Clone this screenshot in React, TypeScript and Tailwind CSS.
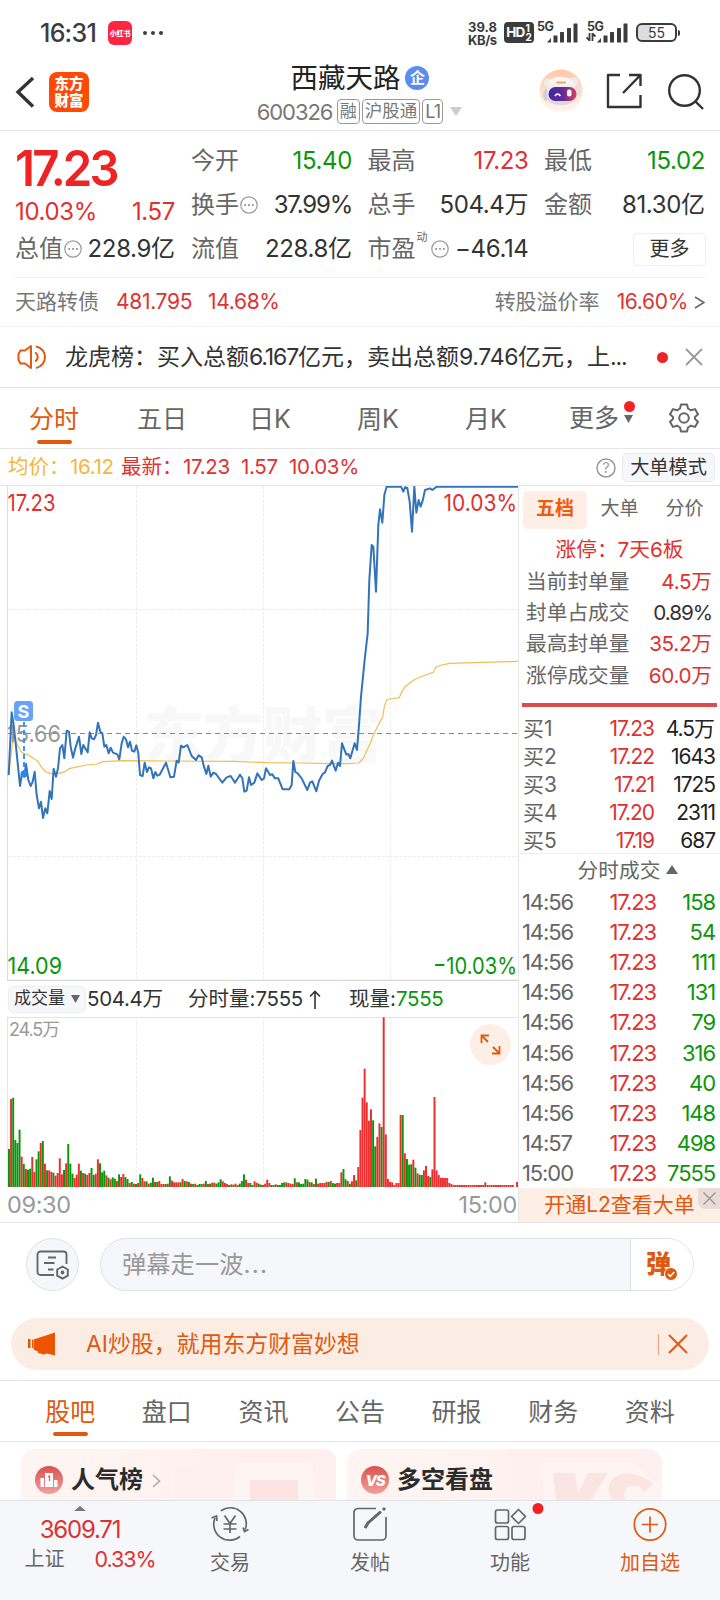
import React from 'react';
import clsx from 'clsx';

// volume bars, one per minute; negative = green
const VOLUMES = [
  -114, 264, -268, -141, -132, -172, 91, -69, 54, -52, -55, 90, 45, -83, -107, 132, -138, 70, -50, 50,
  45, -43, 34, 42, 86, 38, -51, 71, -129, -70, -40, 27, 37, 70, -49, 42, -40, 36, 42, -57,
  -36, 40, 83, -71, -44, -49, 35, -28, 23, -29, -25, 18, -38, 30, 39, -30, -24, 12, -15, 10,
  -9, 12, -38, 27, 17, -17, 10, -13, -28, 15, -15, 18, 9, 9, -9, 10, -32, 19, 14, 14,
  14, -14, 24, -18, 17, -15, 10, -9, 10, -6, -9, -9, 10, -18, 9, -10, 13, 13, -10, -14,
  -23, 17, 12, 9, -6, 8, -7, 10, 6, -10, -18, -38, 22, 12, -12, -6, 17, 13, -10, -7,
  6, 10, 22, 12, -6, -6, 8, -6, -6, -12, -14, 14, 12, 10, 9, -26, 14, -14, -9, -10,
  -24, -22, 15, -14, 9, -25, 10, 12, 12, 12, 15, -15, 18, -12, -10, 12, 12, 44, -54, -23,
  18, -10, 17, 36, -20, 60, 171, 268, 355, 254, 199, 233, -200, -122, 150, 191, -180, 509, 158, 24,
  15, 14, 6, 12, 12, 216, -216, 101, -84, -67, -68, 82, -58, 41, -37, -36, 50, 63, 33, -30,
  53, 270, 50, 36, 28, 27, 27, 27, 12, 9, 6, 6, 6, 6, 6, 6, 6, 6, 6, 6,
  6, 6, 6, 6, 6, 14, 6, 6, 6, 6, 6, 6, 6, 6, 6, 6, 6, 6, 6, 0, 15,
];

const PRICE_LINE =
  '26,885 35,697 41,735 48,800 60,918 66,880 73,890 78,852 85,900 92,918 98,905 104,875 110,945 117,985 123,965 129,1014 136,985 142,1000 149,933 155,957 161,866 168,890 174,865 180,805 187,795 193,835 200,752 207,755 212,800 219,833 226,805 237,770 244,822 250,795 263,817 269,757 275,775 282,778 288,765 294,728 301,755 307,760 313,800 319,795 326,820 332,803 339,818 352,823 358,838 365,790 371,770 378,778 384,802 390,785 396,812 403,815 409,796 415,820 420,885 428,888 434,848 441,876 447,862 453,865 460,895 466,876 472,887 479,884 498,848 504,868 511,892 522,890 530,842 536,848 543,797 550,802 562,795 575,828 588,840 596,826 605,832 612,860 619,882 625,857 632,890 640,878 648,882 667,908 680,892 692,888 705,908 720,884 727,895 733,935 740,932 747,892 753,915 763,908 772,880 785,900 792,895 798,865 810,885 817,883 825,895 835,895 848,928 868,928 875,915 880,843 886,876 893,880 905,895 922,930 930,908 937,904 949,934 957,902 968,882 975,877 983,858 990,855 996,842 1007,872 1014,848 1020,858 1026,790 1039,824 1045,822 1051,835 1064,790 1071,810 1077,735 1083,650 1095,530 1103,460 1108,300 1115,195 1120,200 1128,335 1135,135 1140,88 1147,128 1153,45 1160,20 1203,20 1210,35 1215,22 1222,24 1229,65 1236,155 1243,20 1249,98 1256,60 1262,80 1268,62 1275,30 1290,25 1297,30 1310,20 1554,20';

const AVG_LINE =
  '26,885 41,760 52,795 66,818 85,825 104,838 112,842 125,862 138,876 150,880 178,880 195,875 210,865 260,855 290,852 310,845 370,842 500,843 700,844 800,848 900,849 1000,851 1040,851 1077,849 1090,835 1100,812 1110,792 1120,765 1130,745 1140,725 1148,712 1153,680 1160,660 1170,657 1198,653 1203,640 1215,620 1245,598 1290,580 1300,577 1308,562 1325,555 1350,550 1450,547 1554,544';

const BUYS = [
  ['买1', '17.23', '4.5万'],
  ['买2', '17.22', '1643'],
  ['买3', '17.21', '1725'],
  ['买4', '17.20', '2311'],
  ['买5', '17.19', '687'],
];

const TICKS = [
  ['14:56', '158'],
  ['14:56', '54'],
  ['14:56', '111'],
  ['14:56', '131'],
  ['14:56', '79'],
  ['14:56', '316'],
  ['14:56', '40'],
  ['14:56', '148'],
  ['14:57', '498'],
  ['15:00', '7555'],
];

const Num: React.FC<{ children: React.ReactNode; className?: string; loose?: boolean }> = ({ children, className, loose }) => (
  <span className={clsx(loose ? 'tracking-[-0.015em]' : 'tracking-[-0.05em]', className)}>{children}</span>
);

const MoreDots = () => (
  <svg width="18" height="18" viewBox="0 0 18 18" className="ml-px shrink-0">
    <circle cx="9" cy="9" r="8.2" fill="none" stroke="#999" strokeWidth="1.2" />
    <circle cx="5.2" cy="9" r="1" fill="#888" />
    <circle cx="9" cy="9" r="1" fill="#888" />
    <circle cx="12.8" cy="9" r="1" fill="#888" />
  </svg>
);

const Signal = () => (
  <svg width="31" height="20" viewBox="0 0 31 20" fill="#3c3c3c">
    <path d="M0 19.500L4 15v4.500z" />
    <rect x="6.500" y="12.500" width="4" height="7" rx="0.500" />
    <rect x="13" y="9" width="4" height="10.500" rx="0.500" />
    <rect x="20" y="5" width="4" height="14.500" rx="0.500" />
    <rect x="26.500" y="0.500" width="4" height="19" rx="0.500" />
  </svg>
);

const StatusBar = () => (
  <div className="flex h-[58px] shrink-0 items-start pl-[40px] pr-[40px] text-[#3c3c3c]">
    <span className="mt-[17px] w-[68px] text-[25px] font-medium leading-[32px] tracking-[-0.03em]">16:31</span>
    <div className="mt-[21px] flex h-6 w-6 items-center justify-center rounded-[6px] bg-[#ff2442]">
      <span className="text-[7px] font-black leading-none tracking-[-0.03em] text-white">小红书</span>
    </div>
    <div className="ml-[11px] mt-[31px] flex gap-[4px]">
      <i className="h-1 w-1 rounded-full bg-[#3c3c3c]" />
      <i className="h-1 w-1 rounded-full bg-[#3c3c3c]" />
      <i className="h-1 w-1 rounded-full bg-[#3c3c3c]" />
    </div>
    <div className="ml-auto mt-[21px] flex">
      <div className="w-[36px] text-[13px] font-bold leading-[13px]">
        <div>39.8</div>
        <div className="tracking-[-0.03em]">KB/s</div>
      </div>
      <div className="mt-[1px] flex h-[21px] w-[30px] items-center justify-center rounded-[4px] bg-[#3c3c3c] text-white">
        <span className="text-[13.500px] font-bold tracking-[-0.060em]">HD</span>
        <span className="ml-px text-[10px] font-bold leading-[9px]">1<br />2</span>
      </div>
      <div className="relative ml-[3px] w-[49px]">
        <span className="absolute left-0 top-[-1px] text-[12.500px] font-bold leading-[13px] tracking-[-0.03em]">5G</span>
        <div className="ml-[10px] mt-[2px]"><Signal /></div>
      </div>
      <div className="relative w-[49px]">
        <span className="absolute left-[1px] top-[-1px] text-[12.500px] font-bold leading-[13px] tracking-[-0.03em]">5G</span>
        <svg width="10" height="8" viewBox="0 0 10 8" className="absolute bottom-[6px] left-0" fill="none" stroke="#3c3c3c" strokeWidth="1.800">
          <path d="M3.500 0v7.500L0.500 4.500M6.500 8V0.500L9.500 3.500" />
        </svg>
        <div className="ml-[11px] mt-[2px]"><Signal /></div>
      </div>
      <div className="ml-[1px] mt-[2px] flex h-[19px] items-center">
        <div className="flex h-[19px] w-[41px] items-center justify-center rounded-[6px] border-2 border-[#3c3c3c] bg-gradient-to-r from-[#ddd] from-35% to-white to-35% text-[14px] leading-none">55</div>
        <div className="ml-px h-[6px] w-[2px] rounded-r bg-[#3c3c3c]" />
      </div>
    </div>
  </div>
);

const Robot = () => (
  <svg width="44" height="44" viewBox="0 0 44 44">
    <defs>
      <linearGradient id="halo" x1="0" y1="0" x2="0" y2="1">
        <stop offset="0" stopColor="#ffc7a8" />
        <stop offset="1" stopColor="#fff7f2" />
      </linearGradient>
      <linearGradient id="visor" x1="0" y1="0" x2="1" y2="0">
        <stop offset="0" stopColor="#3a2aa8" />
        <stop offset="0.550" stopColor="#6b2a94" />
        <stop offset="1" stopColor="#e0405f" />
      </linearGradient>
      <linearGradient id="shell" x1="0" y1="0" x2="0" y2="1">
        <stop offset="0" stopColor="#fdfbfb" />
        <stop offset="1" stopColor="#d9d3d9" />
      </linearGradient>
    </defs>
    <circle cx="22" cy="22" r="21.500" fill="url(#halo)" />
    <circle cx="9" cy="13.500" r="4" fill="#f3eaea" />
    <circle cx="35" cy="12.500" r="4" fill="#f3eaea" />
    <ellipse cx="7.500" cy="26" rx="3.500" ry="6" fill="#d3ced6" />
    <ellipse cx="38" cy="22" rx="3" ry="6" fill="#e4dfe3" />
    <path d="M8 18c0-7 6-10 14-10s14 3 14 10v10c0 5-6 8-14 8S8 33 8 28z" fill="url(#shell)" />
    <rect x="17" y="12.500" width="10" height="2" rx="1" fill="#f3a66c" />
    <rect x="9.500" y="18" width="28" height="14" rx="7" fill="url(#visor)" />
    <path d="M16 27q2.500-4 5.500 0" fill="none" stroke="#fff" strokeWidth="1.600" />
    <rect x="28" y="20.500" width="4.500" height="7" rx="2" fill="#fff" />
  </svg>
);

const Header = () => (
  <div className="flex h-[73px] shrink-0 items-start justify-between border-b border-[#e6e6e6] pl-[15px] pr-[16px]">
    <div className="mt-[14px] flex w-[200px] items-center gap-[14px]">
      <svg width="20" height="34" viewBox="0 0 20 34" fill="none" stroke="#333" strokeWidth="3.400">
        <path d="M18 3L3 17l15 14.500" />
      </svg>
      <div className="flex h-[40px] w-[40px] flex-col items-center justify-center rounded-[8px] bg-[#ff4a05] text-[14.500px] font-black leading-[17px] text-white">
        <span>东方</span>
        <span>财富</span>
      </div>
    </div>
    <div className="flex flex-col items-center">
      <div className="flex h-[39px] items-center gap-[5px] pl-px">
        <h1 className="text-[27.500px] leading-[36px] text-[#222]">西藏天路</h1>
        <span className="flex h-[24px] w-[24px] items-center justify-center rounded-full bg-[#5b8dee] text-[15px] font-bold leading-none text-white">企</span>
      </div>
      <div className="mt-[2px] flex items-center gap-[2px] text-[#777]">
        <span className="mr-[2px] w-[76px] text-[22px] leading-[24px] tracking-[-0.05em]">600326</span>
        <span className="flex h-[25px] items-center rounded-[4px] border border-[#999] px-[2px] text-[17px]">融</span>
        <span className="flex h-[25px] items-center rounded-[4px] border border-[#999] px-[2px] text-[17.500px]">沪股通</span>
        <span className="flex h-[25px] items-center rounded-[4px] border border-[#999] px-[2px] text-[18px] tracking-[-0.05em]">L1</span>
        <svg width="12" height="9" viewBox="0 0 12 9" className="ml-[5px]"><path d="M0 0h12L6 9z" fill="#ccc" /></svg>
      </div>
    </div>
    <div className="mt-[11px] flex w-[200px] items-center justify-end">
      <Robot />
      <svg width="36" height="36" viewBox="0 0 36 36" className="ml-[23px]" fill="none" stroke="#333" strokeWidth="2.400" strokeLinejoin="round">
        <path d="M14 2H2v32h32.500V22M23 2h11.500v11M34 2.500L17 20" />
      </svg>
      <svg width="37" height="37" viewBox="0 0 37 37" className="ml-[25px]" fill="none" stroke="#333" strokeWidth="2.400">
        <circle cx="17.500" cy="17.500" r="15.300" />
        <path d="M28.500 28.500L36 36" />
      </svg>
    </div>
  </div>
);

const Cell: React.FC<{ label: React.ReactNode; value: React.ReactNode; color?: string }> = ({ label, value, color = 'text-[#333]' }) => (
  <div className="flex h-[44px] items-center justify-between whitespace-nowrap">
    <span className="flex items-center text-[#666]">{label}</span>
    <span className={color}>{value}</span>
  </div>
);

const Quote = () => (
  <div className="mx-[15px] flex h-[147px] shrink-0 gap-[16px] border-b border-[#eee] pt-[8px] text-[24px] leading-[32px]">
    <div className="w-[161px] text-[#e03131]">
      <div className="flex h-[57px] items-center">
        <span className="origin-left scale-x-[0.945] text-[50px] font-semibold leading-[56px] tracking-[-0.060em] text-[#ee2424]">17.23</span>
      </div>
      <div className="flex h-[31px] items-center justify-between">
        <Num loose>10.03%</Num>
        <Num loose>1.57</Num>
      </div>
      <Cell label={<>总值<MoreDots /></>} value={<><Num loose>228.9</Num>亿</>} />
    </div>
    <div className="grid flex-1 grid-cols-[161px_161px_161px] content-start gap-x-[15.500px]">
      <Cell label="今开" value={<Num loose>15.40</Num>} color="text-[#0a960a]" />
      <Cell label="最高" value={<Num loose>17.23</Num>} color="text-[#e03131]" />
      <Cell label="最低" value={<Num loose>15.02</Num>} color="text-[#0a960a]" />
      <Cell label={<>换手<MoreDots /></>} value={<Num>37.99%</Num>} />
      <Cell label="总手" value={<><Num loose>504.4</Num>万</>} />
      <Cell label="金额" value={<><Num loose>81.30</Num>亿</>} />
      <Cell label="流值" value={<><Num loose>228.8</Num>亿</>} />
      <Cell
        label={<>市盈<span className="mb-[24px] ml-px mr-[2px] text-[11px] leading-none">动</span><MoreDots /></>}
        value={<Num loose>−46.14</Num>}
      />
      <div className="flex h-[44px] items-center justify-end">
        <button className="mr-[-1px] h-[33px] w-[73px] rounded-[4px] border border-[#eee] text-[20px] leading-[30px] text-[#333]">更多</button>
      </div>
    </div>
  </div>
);

const BondRow = () => (
  <div className="flex h-[49px] shrink-0 items-center border-b border-[#f3f3f3] pl-[15px] pr-[15px] text-[21px] text-[#e03131]">
    <span className="w-[101px] text-[#777]">天路转债</span>
    <Num loose className="w-[92px]">481.795</Num>
    <Num loose>14.68%</Num>
    <span className="ml-auto w-[122px] text-[#777]">转股溢价率</span>
    <Num loose>16.60%</Num>
    <svg width="11" height="13" viewBox="0 0 11 13" className="ml-[6px]" fill="none" stroke="#666" strokeWidth="1.500">
      <path d="M1 1l9 5.500L1 12" />
    </svg>
  </div>
);

const Ticker = () => (
  <div className="flex h-[61px] shrink-0 items-center border-b border-[#e6e6e6] pl-[17px] pr-[17px]">
    <svg width="31" height="26" viewBox="0 0 31 26" fill="none" stroke="#e0590f" strokeWidth="2" strokeLinejoin="round">
      <path d="M14 2v22l-6-4.500H3.500L1.500 16V10l2-3.500H8z" />
      <path d="M18 8.500c3.500 2 3.500 7 0 9M19 2.500c12 2 12 19 0 21.500" />
    </svg>
    <span className="ml-[17px] whitespace-nowrap text-[23px] leading-[30px] text-[#333]">
      龙虎榜：买入总额<Num>6.167</Num>亿元，卖出总额<Num loose>9.746</Num>亿元，上<Num>...</Num>
    </span>
    <i className="ml-auto h-[11px] w-[11px] rounded-full bg-[#ee2424]" />
    <svg width="18" height="18" viewBox="0 0 18 18" className="ml-[17px]" stroke="#999" strokeWidth="1.800">
      <path d="M1 1l16 16M17 1L1 17" />
    </svg>
  </div>
);

const PeriodTabs = () => (
  <div className="flex h-[61px] shrink-0 border-b border-[#e6e6e6] text-[25px] text-[#666]">
    {['分时', '五日', '日K', '周K', '月K'].map((tab, idx) => (
      <div key={tab} className={clsx('flex w-[108px] flex-col items-center justify-end', idx === 0 && 'text-[#e0590f]')}>
        <span className="leading-[36px]">{tab}</span>
        <i className={clsx('mb-[4px] mt-[3px] h-[4px] w-[35px] rounded-full', idx === 0 && 'bg-[#e0590f]')} />
      </div>
    ))}
    <div className="relative flex w-[108px] items-center justify-center pt-[2px]">
      更多
      <i className="absolute right-[13.500px] top-[13px] h-[11px] w-[11px] rounded-full bg-[#ee2424]" />
      <svg width="9" height="8" viewBox="0 0 9 8" className="absolute right-[15px] top-[27px]"><path d="M0 0h9L4.500 8z" fill="#666" /></svg>
    </div>
    <div className="flex w-[72px] items-center justify-center">
      <svg width="30" height="30" viewBox="0 0 30 30" fill="none" stroke="#666" strokeWidth="2" strokeLinejoin="round">
        <path d="M12 1.500h6l1 4 3 1.800 4-1.200 3 5.200-3 2.700v2l3 2.700-3 5.200-4-1.200-3 1.800-1 4h-6l-1-4-3-1.800-4 1.200-3-5.200 3-2.700v-2l-3-2.700 3-5.200 4 1.200 3-1.800z" />
        <circle cx="15" cy="15" r="4.800" />
      </svg>
    </div>
  </div>
);

const AvgRow = () => (
  <div className="flex h-[37px] shrink-0 items-center border-b border-[#e6e6e6] pl-[8px] pr-[5px] pt-px text-[20.500px] text-[#e03131]">
    <span className="w-[62px] text-[#f5b63f]">均价：</span>
    <Num loose className="w-[51px] text-[#f5b63f]">16.12</Num>
    <span className="w-[62px]">最新：</span>
    <Num loose className="w-[58px]">17.23</Num>
    <Num loose className="w-[48px]">1.57</Num>
    <Num loose>10.03%</Num>
    <svg width="20" height="20" viewBox="0 0 20 20" className="ml-auto">
      <circle cx="10" cy="10" r="9" fill="none" stroke="#999" strokeWidth="1.500" />
      <text x="10" y="15" textAnchor="middle" fontSize="14" fill="#999">?</text>
    </svg>
    <span className="ml-[6px] flex h-[29px] w-[93px] items-center justify-center rounded-[5px] border border-[#e8eaee] bg-[#f6f7fa] text-[19.200px] text-[#333]">大单模式</span>
  </div>
);

const PriceChart = () => (
  <svg width="518" height="495" viewBox="0 486 518 495" className="block">
    <text x="144" y="757" fontSize="60" fontWeight="900" fill="#f8f8f8" textLength="238">东方财富</text>
    <g stroke="#ececec" strokeDasharray="3 1.500" strokeWidth="1">
      <path d="M136.500 486v494M263.500 486v494M390.500 486v494M8 609.500h510M8 856.500h510" />
    </g>
    <path d="M7.500 486v494" stroke="#ddd" />
    <path d="M7 980.300h512" stroke="#ccc" />
    <g fill="none" transform="translate(0 480) scale(0.33333)" strokeLinejoin="round">
      <polyline points={AVG_LINE} stroke="#f2bd4f" strokeWidth="3.500" />
    </g>
    <path d="M8 733.500h510" stroke="#888" strokeDasharray="5 4" />
    <text x="7" y="742" fontSize="23.500" fill="#999" textLength="54" lengthAdjust="spacingAndGlyphs">15.66</text>
    <g fill="none" transform="translate(0 480) scale(0.33333)" strokeLinejoin="round">
      <polyline points={PRICE_LINE} stroke="#3374b8" strokeWidth="6" />
    </g>
    <path d="M24 722v52" stroke="#4a90ea" strokeWidth="2" strokeDasharray="5 3" />
    <circle cx="24" cy="774" r="3.500" fill="#2a85f5" />
    <rect x="14" y="701" width="19" height="20" rx="3.500" fill="#67a3f7" />
    <text x="23.500" y="717.500" fontSize="18" fontWeight="700" fill="#fff" textAnchor="middle">S</text>
    <g fontSize="23.500" fill="#e03131">
      <text x="7.500" y="510.500" textLength="48" lengthAdjust="spacingAndGlyphs">17.23</text>
      <text x="443.500" y="510.500" textLength="73.500" lengthAdjust="spacingAndGlyphs">10.03%</text>
    </g>
    <g fontSize="23.500" fill="#0a960a">
      <text x="7.500" y="973.500" textLength="54.500" lengthAdjust="spacingAndGlyphs">14.09</text>
      <text x="433" y="973.500" textLength="84" lengthAdjust="spacingAndGlyphs">−10.03%</text>
    </g>
  </svg>
);

const VolumeChart = () => (
  <div className="relative">
    <svg width="518" height="170" viewBox="0 0 518 170" className="block">
      <path d="M7 0.500h512M7.500 0v169.500" stroke="#e4e4e4" />
      <path d="M136.500 0v169M263.500 0v169M390.500 0v169" stroke="#ececec" strokeDasharray="3 1.500" />
      <text x="9" y="19" fontSize="18" fill="#999" textLength="51">24.5万</text>
      {VOLUMES.map((v, i) => (
        <rect key={i} x={8 + i * 2.117} y={170 - Math.abs(v) / 3} width="1.950" height={Math.abs(v) / 3} fill={v < 0 ? '#0a960a' : '#ee2c2c'} />
      ))}
    </svg>
    <button className="absolute left-[470px] top-[7px] flex h-[41px] w-[41px] items-center justify-center rounded-full bg-[#fdeee6]">
      <svg width="21" height="21" viewBox="0 0 21 21" fill="none" stroke="#e0590f" strokeWidth="1.800">
        <path d="M9 1.500H1.500V9M1.500 1.500L8 8M12 19.500h7.500V12M19.500 19.500L13 13" />
      </svg>
    </button>
  </div>
);

const ChartColumn = () => (
  <div className="w-[519px] border-r border-[#e6e6e6]">
    <PriceChart />
    <div className="flex h-[36px] items-center pl-[8px] text-[20.500px] text-[#333]">
      <span className="flex h-[27px] w-[78px] items-center justify-center gap-[6px] rounded-[5px] border border-[#eceef2] bg-[#f6f7fa] text-[17px]">
        成交量
        <svg width="9" height="8" viewBox="0 0 9 8"><path d="M0 0h9L4.500 8z" fill="#666" /></svg>
      </span>
      <span className="ml-px w-[101px]"><Num loose>504.4</Num>万</span>
      <span className="flex w-[161px] items-center">
        分时量:<Num loose>7555</Num>
        <svg width="12" height="19" viewBox="0 0 12 19" className="ml-[6px]" fill="none" stroke="#333" strokeWidth="1.600">
          <path d="M6 19V1.500M1 6.500l5-5 5 5" />
        </svg>
      </span>
      <span>现量:<Num loose className="text-[#0a960a]">7555</Num></span>
    </div>
    <VolumeChart />
    <div className="flex h-[35px] items-center justify-between pl-[7px] pr-[1px] pt-px text-[23.500px] text-[#999]">
      <Num loose>09:30</Num>
      <Num loose>15:00</Num>
    </div>
  </div>
);

const SealRow: React.FC<{ label: string; value: React.ReactNode; dark?: boolean }> = ({ label, value, dark }) => (
  <div className="flex h-[31.300px] items-center justify-between">
    <span className="text-[#666]">{label}</span>
    <span className={dark ? 'text-[#333]' : 'text-[#e03131]'}>{value}</span>
  </div>
);

const OrderBook = () => (
  <div className="flex flex-1 flex-col overflow-hidden">
    <div className="flex h-[47px] items-center pl-[4px] text-[19px] text-[#666]">
      <span className="flex h-[38px] w-[64px] items-center justify-center rounded-[5px] bg-[#fdeee6] font-bold text-[#f05a0a]">五档</span>
      <span className="w-[65px] text-center">大单</span>
      <span className="w-[65px] text-center">分价</span>
    </div>
    <div className="flex h-[33px] items-center justify-center pt-px text-[20.700px] text-[#e03131]">涨停：7天6板</div>
    <div className="h-[137px] pl-[7px] pr-[8px] text-[20.700px] leading-[28px]">
      <SealRow label="当前封单量" value={<><Num loose>4.5</Num>万</>} />
      <SealRow label="封单占成交" value={<Num>0.89%</Num>} dark />
      <SealRow label="最高封单量" value={<><Num loose>35.2</Num>万</>} />
      <SealRow label="涨停成交量" value={<><Num loose>60.0</Num>万</>} />
    </div>
    <div className="mx-[3px] h-[3.500px] shrink-0 bg-[#dc4c4c]" />
    <div className="flex h-[147px] shrink-0 flex-col border-b border-[#eee] pl-[4px] pr-[5px] pt-[8.500px] text-[21px]">
      {BUYS.map(([label, price, vol]) => (
        <div key={label} className="flex h-[28px] items-center whitespace-nowrap">
          <span className="w-[48px] text-[#666]">{label}</span>
          <Num className="w-[83px] text-right text-[#e03131]">{price}</Num>
          <span className="flex-1 text-right text-[#222]">
            {vol.endsWith('万') ? <><Num>4.5</Num>万</> : <Num>{vol}</Num>}
          </span>
        </div>
      ))}
    </div>
    <div className="flex h-[34px] shrink-0 items-center justify-center gap-[6px] pl-[17px] pt-px text-[20.700px] text-[#666]">
      分时成交
      <svg width="12" height="9" viewBox="0 0 12 9" className="mb-[3px]"><path d="M0 9h12L6 0z" fill="#666" /></svg>
    </div>
    <div className="shrink-0 pl-[3px] pr-[5px] text-[22px]">
      {TICKS.map(([time, vol], idx) => (
        <div key={idx} className="flex h-[30.100px] items-center">
          <Num className="w-[62px] text-[#666]">{time}</Num>
          <Num className="w-[72px] text-right text-[#e03131]">17.23</Num>
          <Num className="flex-1 text-right text-[#0a960a]">{vol}</Num>
        </div>
      ))}
    </div>
    <div className="relative flex flex-1 items-center justify-center bg-[#fdeee6] text-[21px] text-[#e0590f]">
      开通L2查看大单
      <span className="absolute right-0 top-0 flex h-[21px] w-[22px] items-center justify-center rounded-bl-[8px] bg-[#e9dcd8]">
        <svg width="13" height="13" viewBox="0 0 13 13" stroke="#999" strokeWidth="1.400"><path d="M0.500 0.500l12 12M12.500 0.500l-12 12" /></svg>
      </span>
    </div>
  </div>
);

const CommentBar = () => (
  <div className="flex h-[84px] shrink-0 items-center border-t border-[#e6e6e6] pl-[26px] pr-[26px]">
    <div className="flex h-[53px] w-[53px] items-center justify-center rounded-full border border-[#dfe1e6] bg-[#f6f7fa]">
      <svg width="33" height="30" viewBox="0 0 33 30" fill="none" stroke="#666" strokeWidth="1.900">
        <path d="M18 25H4.500a3 3 0 0 1-3-3V4.500a3 3 0 0 1 3-3h23a3 3 0 0 1 3 3V14M12 7.500h8M8 13h10.500M12 19.500h5.500" />
        <path d="M26.500 16.500l5.300 3v6.200l-5.300 3-5.300-3v-6.200z" />
        <circle cx="26.500" cy="22.500" r="1" fill="#666" />
      </svg>
    </div>
    <div className="ml-[21px] flex h-[53px] flex-1 items-center overflow-hidden rounded-full border border-[#dfe1e6] bg-[#f6f7fa]">
      <span className="flex-1 pl-[21px] text-[24.300px] text-[#999]">弹幕走一波<span className="tracking-[0.050em]">...</span></span>
      <div className="relative flex h-full w-[63px] items-center border-l border-[#dfe1e6] bg-white pl-[15px]">
        <span className="text-[25px] font-black leading-none text-[#e0590f]">弹</span>
        <svg width="14" height="14" viewBox="0 0 14 14" className="absolute left-[33px] top-[28px]">
          <circle cx="7" cy="7" r="6.500" fill="#e0590f" stroke="#fff" />
          <path d="M4 7l2.300 2.300L10.300 5" fill="none" stroke="#fff" strokeWidth="1.500" />
        </svg>
      </div>
    </div>
  </div>
);

const Promo = () => (
  <div className="mx-[11px] mt-[12px] flex h-[52px] shrink-0 items-center rounded-full bg-[#fcede4] pl-[17px] pr-[21px] text-[#e0590f]">
    <svg width="28" height="24" viewBox="0 0 28 24" fill="#eb5500">
      <path d="M0 7h2.500v9H0zM4 7.500h1V16H4zM5.500 7.500L27 0.500v23l-8-2-3 1-6-1.500v-1.500l-4.500-2z" />
    </svg>
    <span className="ml-[30px] text-[22.900px]">AI炒股，就用东方财富妙想</span>
    <i className="ml-auto h-[21px] w-px bg-[#e8a37c]" />
    <svg width="20" height="20" viewBox="0 0 20 20" className="ml-[9px]" stroke="#e0590f" strokeWidth="2"><path d="M1 1l18 18M19 1L1 19" /></svg>
  </div>
);

const InfoTabs = () => (
  <div className="mt-[10px] flex h-[62px] shrink-0 border-b border-t border-[#e6e6e6] px-[22px] text-[25px] text-[#666]">
    {['股吧', '盘口', '资讯', '公告', '研报', '财务', '资料'].map((tab, idx) => (
      <div key={tab} className={clsx('flex flex-1 flex-col items-center justify-end', idx === 0 && 'text-[#e0590f]')}>
        <span className="leading-[36px]">{tab}</span>
        <i className={clsx('mb-[5px] mt-[2px] h-[4px] w-[35px] rounded-full', idx === 0 && 'bg-[#e0590f]')} />
      </div>
    ))}
  </div>
);

const Cards = () => (
  <div className="flex h-[58px] shrink-0 gap-[11px] overflow-hidden pl-[21px] pt-[7px] text-[24px] font-bold text-[#2b2b2b]">
    <div className="relative flex h-[90px] w-[315px] items-start overflow-hidden rounded-[14px] bg-gradient-to-r from-[#fef5f3] to-[#fdefed]">
      <svg width="162" height="60" viewBox="0 0 162 60" className="absolute right-0 top-0">
        <path d="M29 0h133v60H0V18h29z" fill="#fdf0ee" />
        <path d="M63 14h76l4 46H57z" fill="#fef4f2" />
        <path d="M76 31h48v29H76z" fill="#fbe3e2" />
      </svg>
      <svg width="28" height="28" viewBox="0 0 28 28" className="ml-[14px] mt-[17px]">
        <defs>
          <linearGradient id="rank" x1="0" y1="0" x2="0" y2="1">
            <stop offset="0" stopColor="#d9504f" />
            <stop offset="1" stopColor="#f0a19c" />
          </linearGradient>
        </defs>
        <circle cx="14" cy="14" r="14" fill="url(#rank)" />
        <path d="M5.500 12h3.500v9H5.500zM10 7h8v14h-8zM19 14h3.500v7H19z" fill="#fff" />
        <path d="M13 11l1.500-1v5" fill="none" stroke="#dc6562" strokeWidth="1.300" />
      </svg>
      <span className="relative ml-[8px] mt-[14px] leading-[34px]">人气榜</span>
      <svg width="9" height="14" viewBox="0 0 9 14" className="relative ml-[9px] mt-[25px]" fill="none" stroke="#aaa" strokeWidth="1.500"><path d="M1 1l6.500 6L1 13" /></svg>
    </div>
    <div className="relative flex h-[90px] w-[315px] items-start overflow-hidden rounded-[14px] bg-gradient-to-r from-[#fef5f3] to-[#fdefed]">
      <svg width="154" height="60" viewBox="0 0 154 60" className="absolute right-0 top-0">
        <path d="M2 0h152v60H8z" fill="#fdf0ee" />
        <path d="M32 13h92l30 25v22H38z" fill="#fef4f2" />
        <path d="M45 24h22l3 20 10-20h20L77 60H49z" fill="#fbe5e3" />
        <path d="M145 35c-8-8-22-13-34-9-12 5-13 16-6 26h14c-6-8-1-16 7-15 5 0 8 3 10 6z" fill="#fbe5e3" />
      </svg>
      <span className="relative ml-[14px] mt-[17px] flex h-[28px] w-[28px] items-center justify-center rounded-full bg-gradient-to-b from-[#d9504f] to-[#f0a19c] text-[15px] font-extrabold italic leading-none tracking-[-0.080em] text-white">VS</span>
      <span className="relative ml-[8px] mt-[14px] leading-[34px]">多空看盘</span>
    </div>
  </div>
);

const NavItem: React.FC<{ label: string; active?: boolean; children: React.ReactNode }> = ({ label, active, children }) => (
  <div className={clsx('relative flex w-[140px] flex-col items-center pt-[5px] text-[20px]', active ? 'text-[#e0590f]' : 'text-[#666]')}>
    <svg width="40" height="36" viewBox="0 0 40 36" fill="none" stroke="currentColor" strokeWidth="1.700" className="overflow-visible">
      {children}
    </svg>
    <span className="mt-[7px] leading-[28px]">{label}</span>
  </div>
);

const BottomNav = () => (
  <div className="flex h-[100px] shrink-0 border-t border-[#e2e3e6] bg-[#f6f7fa]">
    <div className="flex w-[160px] flex-col items-center text-[#e03131]">
      <svg width="12" height="5" viewBox="0 0 12 5" className="mt-[5px]"><path d="M0 5h12L6 0z" fill="#777" /></svg>
      <Num className="mt-[3px] text-[24px] leading-[32px]">3609.71</Num>
      <div className="ml-[20px] flex w-[131px] items-center justify-between text-[20px] leading-[26px]">
        <span className="text-[#666]">上证</span>
        <Num className="text-[21.500px]">0.33%</Num>
      </div>
    </div>
    <NavItem label="交易">
      <path d="M11 4.700A16 16 0 0 1 35.200 23.500M30 30.500A16 16 0 0 1 5 12M1.500 12l5-2 0.500 5M38.500 23.500L34.500 25.500l-1.500-4" />
      <path d="M14.500 9.500l5.500 8 5.500-8M13.500 18h13M13.500 23h13M20 17.500V27" />
    </NavItem>
    <NavItem label="发帖">
      <path d="M26 2.500H8a4 4 0 0 0-4 4V30a4 4 0 0 0 4 4h24a4 4 0 0 0 4-4V11" />
      <path d="M15 22l3-5L31 5.500M33 4l2-2" strokeWidth="3" />
    </NavItem>
    <NavItem label="功能">
      <rect x="5.500" y="4" width="13" height="13" rx="2" />
      <rect x="5.500" y="20.500" width="13" height="13" rx="2" />
      <rect x="22" y="20.500" width="13" height="13" rx="2" />
      <path d="M28.500 3.500l7 7-7 7-7-7z" strokeLinejoin="round" />
      <circle cx="48" cy="2.500" r="5.500" fill="#ee2424" stroke="none" />
    </NavItem>
    <NavItem label="加自选" active>
      <circle cx="20" cy="18.500" r="15.700" />
      <path d="M12 18.500h16M20 10.500v16" />
    </NavItem>
  </div>
);

const App: React.FC = () => {
  return (
    <div className="flex h-[1600px] w-[720px] flex-col overflow-hidden bg-white font-[Inter,'Noto_Sans_CJK_SC',sans-serif]">
      <StatusBar />
      <Header />
      <Quote />
      <BondRow />
      <Ticker />
      <PeriodTabs />
      <AvgRow />
      <div className="flex h-[736px] shrink-0">
        <ChartColumn />
        <OrderBook />
      </div>
      <CommentBar />
      <Promo />
      <InfoTabs />
      <Cards />
      <BottomNav />
    </div>
  );
};

export default App;
